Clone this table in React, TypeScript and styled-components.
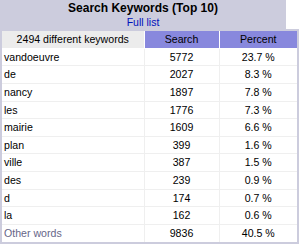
import React from "react";
import styled, { createGlobalStyle } from "styled-components";

type Keyword = { word: string; hits: number; percent: string };

const keywords: Keyword[] = [
  { word: "vandoeuvre", hits: 5772, percent: "23.7 %" },
  { word: "de", hits: 2027, percent: "8.3 %" },
  { word: "nancy", hits: 1897, percent: "7.8 %" },
  { word: "les", hits: 1776, percent: "7.3 %" },
  { word: "mairie", hits: 1609, percent: "6.6 %" },
  { word: "plan", hits: 399, percent: "1.6 %" },
  { word: "ville", hits: 387, percent: "1.5 %" },
  { word: "des", hits: 239, percent: "0.9 %" },
  { word: "d", hits: 174, percent: "0.7 %" },
  { word: "la", hits: 162, percent: "0.6 %" }
];

const GlobalStyle = createGlobalStyle`
  body {
    margin: 0;
    background: #ffffff;
    font-family: "Liberation Sans", Arial, sans-serif;
  }
`;

const Panel = styled.div`
  width: 299px;
`;

const TitleBox = styled.div`
  width: 286px;
  background-color: #ccccdd;
  text-align: center;
  padding: 1px 0 1px;
  box-sizing: border-box;
  height: 30px;
`;

const Title = styled.div`
  font-size: 12px;
  font-weight: bold;
  line-height: 15px;
  color: #000000;
`;

const FullList = styled.a`
  display: block;
  font-size: 10.5px;
  line-height: 12px;
  color: #0011bb;
  text-decoration: none;
`;

const DataBox = styled.div`
  border: 2px solid #ccccdd;
  margin-top: -1px;
  background: #ffffff;
`;

const Table = styled.table`
  width: 100%;
  border-collapse: collapse;
  border-style: hidden;
  table-layout: fixed;
  font-size: 10.6px;
  line-height: 12.64px;
`;

const HeadCell = styled.th<{ $accent?: boolean }>`
  background-color: ${p => (p.$accent ? "#8888dd" : "#ececec")};
  border: 1px solid #ffffff;
  padding: 2px;
  font-weight: normal;
  text-align: center;
  color: #000000;
`;

const Cell = styled.td<{ $left?: boolean; $muted?: boolean }>`
  border: 1px solid #efefef;
  padding: 2px;
  text-align: ${p => (p.$left ? "left" : "center")};
  color: ${p => (p.$muted ? "#666688" : "#000000")};
  white-space: nowrap;
`;

export default function App() {
  return (
    <>
      <GlobalStyle />
      <Panel>
        <TitleBox>
          <Title>Search Keywords (Top 10)</Title>
          <FullList href="#">Full list</FullList>
        </TitleBox>
        <DataBox>
          <Table>
            <colgroup>
              <col style={{ width: 142 }} />
              <col style={{ width: 75 }} />
              <col />
            </colgroup>
            <thead>
              <tr>
                <HeadCell>2494 different keywords</HeadCell>
                <HeadCell $accent>Search</HeadCell>
                <HeadCell $accent>Percent</HeadCell>
              </tr>
            </thead>
            <tbody>
              {keywords.map(k => (
                <tr key={k.word}>
                  <Cell $left>{k.word}</Cell>
                  <Cell>{k.hits}</Cell>
                  <Cell>{k.percent}</Cell>
                </tr>
              ))}
              <tr>
                <Cell $left $muted>
                  Other words
                </Cell>
                <Cell>9836</Cell>
                <Cell>40.5 %</Cell>
              </tr>
            </tbody>
          </Table>
        </DataBox>
      </Panel>
    </>
  );
}
